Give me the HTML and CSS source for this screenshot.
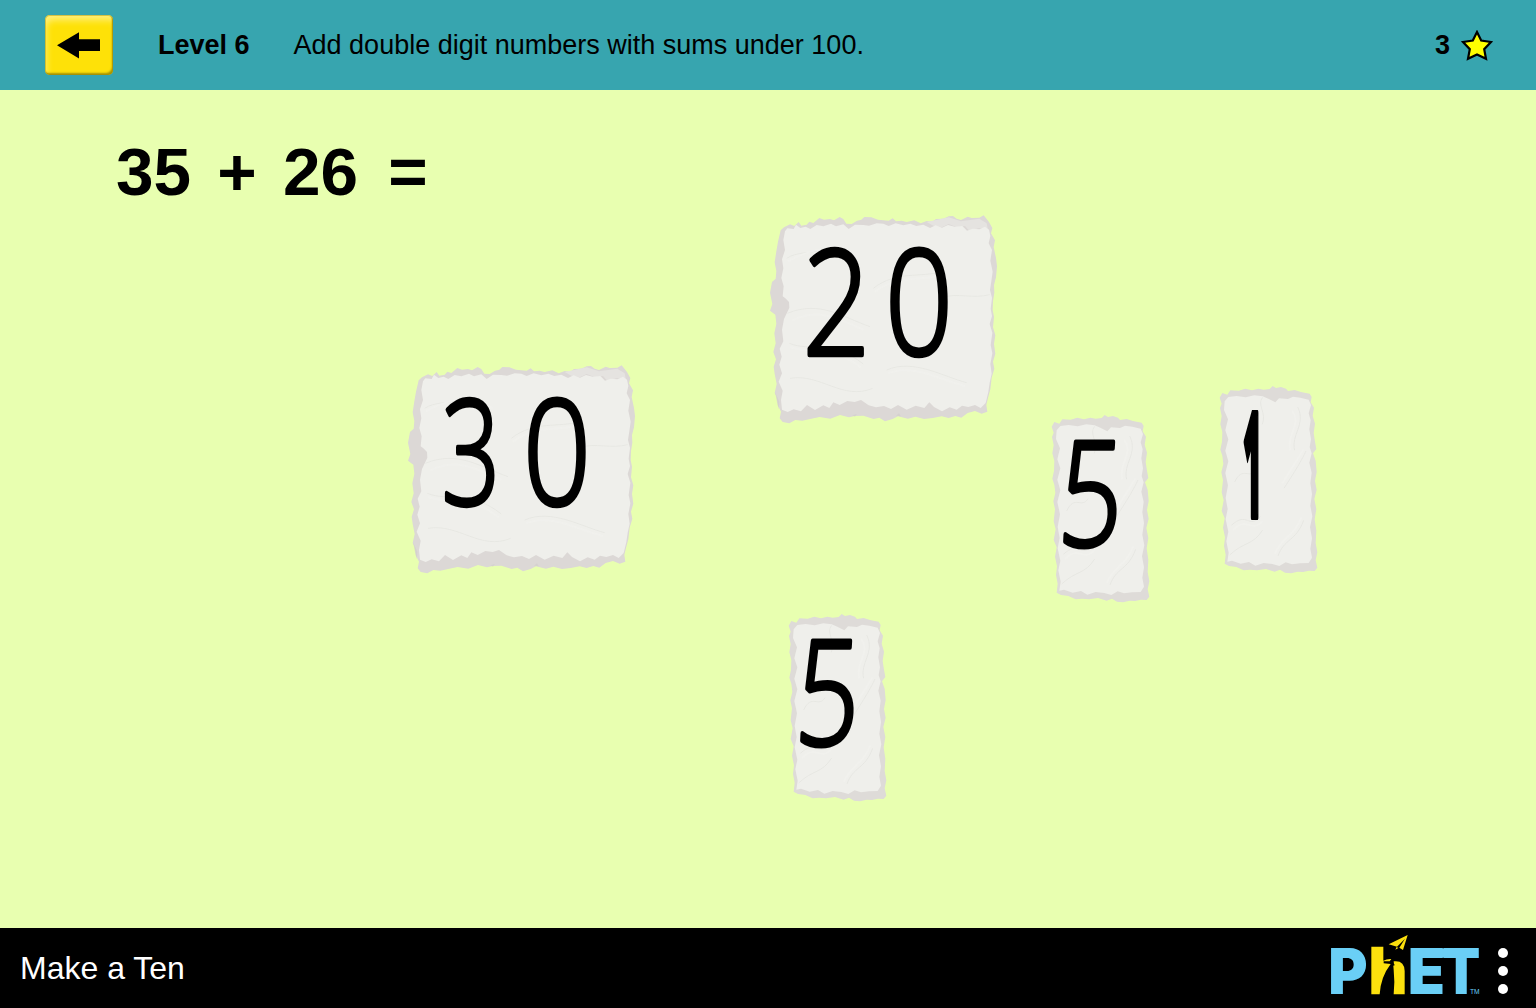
FILE: index.html
```html
<!DOCTYPE html>
<html lang="en">
<head>
<meta charset="utf-8">
<title>Make a Ten</title>
<link rel="stylesheet" href="styles.css">
</head>
<body>
<svg class="defs" aria-hidden="true">
  <defs>
    <filter id="torn" x="-5%" y="-5%" width="110%" height="110%">
      <feTurbulence type="fractalNoise" baseFrequency="0.16" numOctaves="2" seed="4" result="n"/>
      <feDisplacementMap in="SourceGraphic" in2="n" scale="1.2" xChannelSelector="R" yChannelSelector="G"/>
    </filter>
    <filter id="soft"><feGaussianBlur stdDeviation="1.2"/></filter>
    <symbol id="paper-wide" viewBox="0 0 750 705">
      <g filter="url(#torn)">
        <path fill="#dcd8d6" d="M62 91L72 82L90 73L103 78L116 66L124 77L140 74L148 65L160 69L178 54L192 59L210 57L222 61L239 51L250 57L259 71L275 72L291 62L304 59L313 51L334 52L354 59L370 61L386 62L398 55L408 64L425 62L440 66L463 61L482 70L500 63L517 65L528 57L550 56L566 49L579 48L590 56L603 60L623 50L635 54L658 53L671 46L680 57L687 66L697 84L693 100L705 121L701 141L708 174L711 198L708 232L702 255L703 278L699 304L698 330L702 350L699 382L706 406L702 432L706 461L699 485L703 506L695 533L691 568L684 594L679 615L682 635L665 641L645 633L623 639L604 653L586 648L566 654L545 649L518 654L492 657L466 650L444 656L414 649L398 657L375 664L358 653L341 657L310 647L284 648L267 652L240 645L211 656L179 651L154 656L127 662L106 660L88 670L68 666L59 655L63 635L54 617L50 592L44 579L50 552L44 522L41 500L48 478L40 456L47 430L43 400L49 371L46 344L30 332L37 312L30 278L36 246L47 236L49 213L44 187L49 154L54 125Z"/>
        <path fill="#e5e3e0" d="M500 66L528 60L566 52L603 64L658 56L680 70L685 95L670 84L654 85L630 95L615 78L590 82L566 72L546 82L520 77Z"/>
        <path fill="#efefeb" d="M75 94L82 85L101 87L108 74L121 84L137 80L151 87L170 75L190 79L213 71L228 79L250 73L266 87L285 74L310 75L327 77L350 70L370 71L386 78L407 70L430 76L451 71L469 78L490 74L510 84L527 76L546 83L564 75L584 80L607 78L621 92L638 86L658 88L675 80L687 89L691 108L686 130L696 150L691 182L698 215L694 244L690 270L696 294L692 326L696 348L689 372L697 398L692 435L697 460L691 492L695 521L689 548L685 576L677 609L662 624L645 615L625 621L606 617L590 629L569 622L546 634L522 621L508 607L493 624L467 617L440 629L414 615L393 627L372 618L348 622L326 616L303 600L284 606L262 603L239 615L220 607L208 624L190 616L165 630L141 615L123 634L101 628L83 636L66 629L63 600L68 572L56 545L66 520L58 494L65 470L59 446L70 424L66 389L72 357L88 323L87 306L76 295L68 289L71 259L64 234L70 205L66 178L75 150L70 120Z"/>
        <path fill="#cfcccb" opacity=".55" d="M46 578L49 597L56 628L58 605ZM278 646L290 642L285 650ZM408 647L417 640L423 649Z"/>
      </g>
      <g fill="none" stroke="#d8d9d3" stroke-width="3" opacity=".32" filter="url(#soft)">
        <path d="M80 175C110 155 150 160 190 150M82 340C180 300 245 350 330 380M88 430C150 455 220 420 310 492M340 265C410 210 480 235 548 214M380 510C460 475 550 530 620 548M550 292C590 278 640 297 689 284M90 535C180 519 248 603 338 565"/>
        <path stroke="#f5f5f2" stroke-width="5" d="M84 184C160 142 206 137 284 174M91 441C160 466 215 432 302 502M345 275C415 220 490 246 543 224M384 520C460 490 540 540 615 558M98 361C180 320 240 360 310 389"/>
      </g>
    </symbol>
    <symbol id="paper-narrow" viewBox="0 0 360 615">
      <g filter="url(#torn)">
        <path fill="#dedbd8" d="M35 65L43 51L58 56L67 43L92 44L112 38L132 43L151 38L167 41L185 39L194 30L204 36L219 33L234 38L240 45L260 42L279 48L305 53L311 63L308 79L318 95L314 119L321 143L317 171L321 197L325 219L315 232L323 254L326 288L321 315L326 341L319 369L325 399L320 430L325 464L323 501L328 529L323 553L328 575L320 585L303 584L285 588L269 587L249 592L231 590L216 581L200 587L174 579L147 583L126 581L107 583L85 573L63 570L50 563L53 536L48 510L51 484L45 455L50 427L41 405L47 373L41 349L45 313L40 289L46 264L43 239L37 221L42 197L43 168L37 145L41 120L36 96L41 83Z"/>
        <path fill="#efefeb" d="M50 76L61 63L86 60L113 64L139 58L164 61L181 68L202 79L213 67L240 69L255 62L277 65L302 71L309 87L302 112L308 133L304 160L309 190L305 213L311 232L304 260L311 290L307 322L312 354L307 389L313 421L306 454L312 487L307 518L312 545L302 561L276 562L252 565L233 559L214 570L193 564L167 561L142 569L123 558L98 563L72 554L58 557L62 530L55 496L61 467L53 430L59 399L53 366L60 328L52 291L61 256L52 224L61 190L52 163L60 130L48 102Z"/>
      </g>
      <g fill="none" stroke="#d8d9d3" stroke-width="3" opacity=".35" filter="url(#soft)">
        <path d="M164 64C145 86 177 110 163 145M269 93C295 145 248 177 260 223M228 337C271 270 281 252 294 225M80 318C104 267 125 313 144 281M70 448C118 404 122 461 157 422M210 540C228 488 265 495 287 433M65 537C110 495 133 510 164 462"/>
        <path stroke="#f5f5f2" stroke-width="5" d="M253 105C282 145 234 177 247 223M223 322C265 254 275 240 286 220M75 462C120 418 128 474 164 435M201 533C219 484 258 483 280 424"/>
      </g>
    </symbol>
  </defs>
</svg>

<div class="sim">
  <header class="status">
    <button class="back" aria-label="Back">
      <svg viewBox="0 0 43 27" width="43" height="27"><path d="M0 13.3L22 .2V7.2H43V19H22V26.6Z"/></svg>
    </button>
    <strong class="level">Level 6</strong>
    <span class="description">Add double digit numbers with sums under 100.</span>
    <span class="score">3
      <svg viewBox="0 0 32 31" width="32" height="31"><path d="M16 2L20.2 10.5L30 12L23.2 19.2L25 28.8L16 24.4L7 28.8L8.8 19.2L2 12L11.8 10.5Z" fill="#ff0" stroke="#000" stroke-width="2.2"/></svg>
    </span>
  </header>

  <main class="play">
    <h1 class="problem">35 + 26 <span class="equals">=</span></h1>

    <svg class="card card-20" viewBox="0 0 250 235">
      <use href="#paper-wide"/>
      <g class="digits">
        <text transform="translate(76.5 154.5) scale(.81 1)">2</text>
        <text transform="translate(159 154.5) scale(.81 1)">0</text>
      </g>
    </svg>
    <svg class="card card-30" viewBox="0 0 250 235">
      <use href="#paper-wide"/>
      <g class="digits">
        <text transform="translate(73 154.5) scale(.7 1)">3</text>
        <text transform="translate(159 154.5) scale(.81 1)">0</text>
      </g>
    </svg>
    <svg class="card card-5-right" viewBox="0 0 120 205">
      <use href="#paper-narrow"/>
      <g class="digits"><text transform="translate(48.5 141) skewX(-3) scale(.76 1)">5</text></g>
    </svg>
    <svg class="card card-1" viewBox="0 0 120 205">
      <use href="#paper-narrow"/>
      <g class="digits one"><text transform="translate(44.5 141) scale(.22 1)">1</text></g>
    </svg>
    <svg class="card card-5-bottom" viewBox="0 0 120 205">
      <use href="#paper-narrow"/>
      <g class="digits"><text transform="translate(48.5 141) skewX(-3) scale(.76 1)">5</text></g>
    </svg>
  </main>

  <footer class="navbar">
    <span class="title">Make a Ten</span>
    <div class="brand">
      <svg class="phet" viewBox="0 0 465 186">
        <g class="phet-letters">
          <text x="-8" y="184" textLength="118" lengthAdjust="spacingAndGlyphs">P</text>
          <text x="230" y="184" textLength="112" lengthAdjust="spacingAndGlyphs">E</text>
          <text x="334" y="184" textLength="114" lengthAdjust="spacingAndGlyphs">T</text>
        </g>
        <path fill="#6acff6" d="M320 46H350V74H320Z"/>
        <path fill="#fce00d" d="M121 41H157V83Q168 77 181 78L176 85H158V91L179 93Q149 132 146 184H121Z"/>
        <path fill="#fce00d" d="M188 85Q220 81 221 114V184H188Q192 145 188 110L187 98L192 96L189 94Z"/>
        <path fill="#fce00d" d="M173 34L230 6L216 51L205 44L222 17L198 41ZM197 42L202 45L193 50Z"/>
        <text class="tm" x="417" y="184">TM</text>
      </svg>
      <svg class="menu" viewBox="0 0 10 46" width="10" height="46"><circle cx="5" cy="5" r="5"/><circle cx="5" cy="23" r="5"/><circle cx="5" cy="41" r="5"/></svg>
    </div>
  </footer>
</div>
</body>
</html>
```
FILE: styles.css
```css
* { box-sizing: border-box; }
body {
  margin: 0;
  background: #000;
  font-family: "Liberation Sans", Arial, sans-serif;
  color: #000;
}
.defs { position: absolute; width: 0; height: 0; }
.sim {
  display: grid;
  grid-template-rows: 90px 1fr 80px;
  height: 100vh;
  overflow: hidden;
}
.status {
  display: flex;
  align-items: center;
  padding: 0 43px 0 45px;
  background: #37a5af;
  font-size: 27px;
  line-height: 1;
}
.back {
  display: grid;
  place-items: center;
  width: 68px;
  height: 60px;
  margin-right: 45px;
  padding: 0 1px 0 0;
  border: 0;
  border-radius: 5px;
  background: #fee108;
  box-shadow:
    inset 0 0 0 1px rgba(160, 140, 10, .45),
    inset -2px -3px 2px -1px #a89400,
    inset 3px 7px 7px -2px #fff07f;
}
.level { margin-right: 44px; }
.score {
  display: flex;
  align-items: center;
  gap: 11px;
  margin-left: auto;
  font-weight: bold;
}
.play {
  position: relative;
  padding: 48px 116px;
  background: #e8ffb0;
}
.problem {
  margin: 0;
  font-size: 67.5px;
  line-height: 1;
  word-spacing: 7.5px;
}
.equals { margin-left: 4px; }
.card { position: absolute; overflow: visible; }
.card-20, .card-30 { width: 250px; height: 235px; }
.card-5-right, .card-1, .card-5-bottom { width: 120px; height: 205px; }
.card-20 { left: 760px; top: 110px; }
.card-30 { left: 397.7px; top: 259.7px; }
.card-5-right { left: 1040px; top: 315px; }
.card-1 { left: 1207.7px; top: 286px; }
.card-5-bottom { left: 776.5px; top: 514px; }
.digits {
  font-family: "Open Sans", sans-serif;
  font-weight: 300;
  font-size: 146px;
  text-anchor: middle;
  stroke: #000;
  stroke-width: 4.4px;
  stroke-linejoin: round;
}
.one { font-weight: 800; stroke-width: 6px; }
.navbar {
  display: flex;
  align-items: center;
  justify-content: space-between;
  padding: 0 28px 0 20px;
  background: #000;
  color: #fff;
}
.title { font-size: 32px; line-height: 1; }
.brand { display: flex; align-items: center; gap: 12px; }
.phet { width: 155px; height: 62px; margin-bottom: 8px; overflow: visible; }
.phet-letters {
  font-family: Inter, sans-serif;
  font-weight: 900;
  font-size: 190px;
  fill: #6acff6;
}
.tm { font-size: 20px; fill: #6acff6; }
.menu { margin-top: 6px; fill: #fff; }
```
